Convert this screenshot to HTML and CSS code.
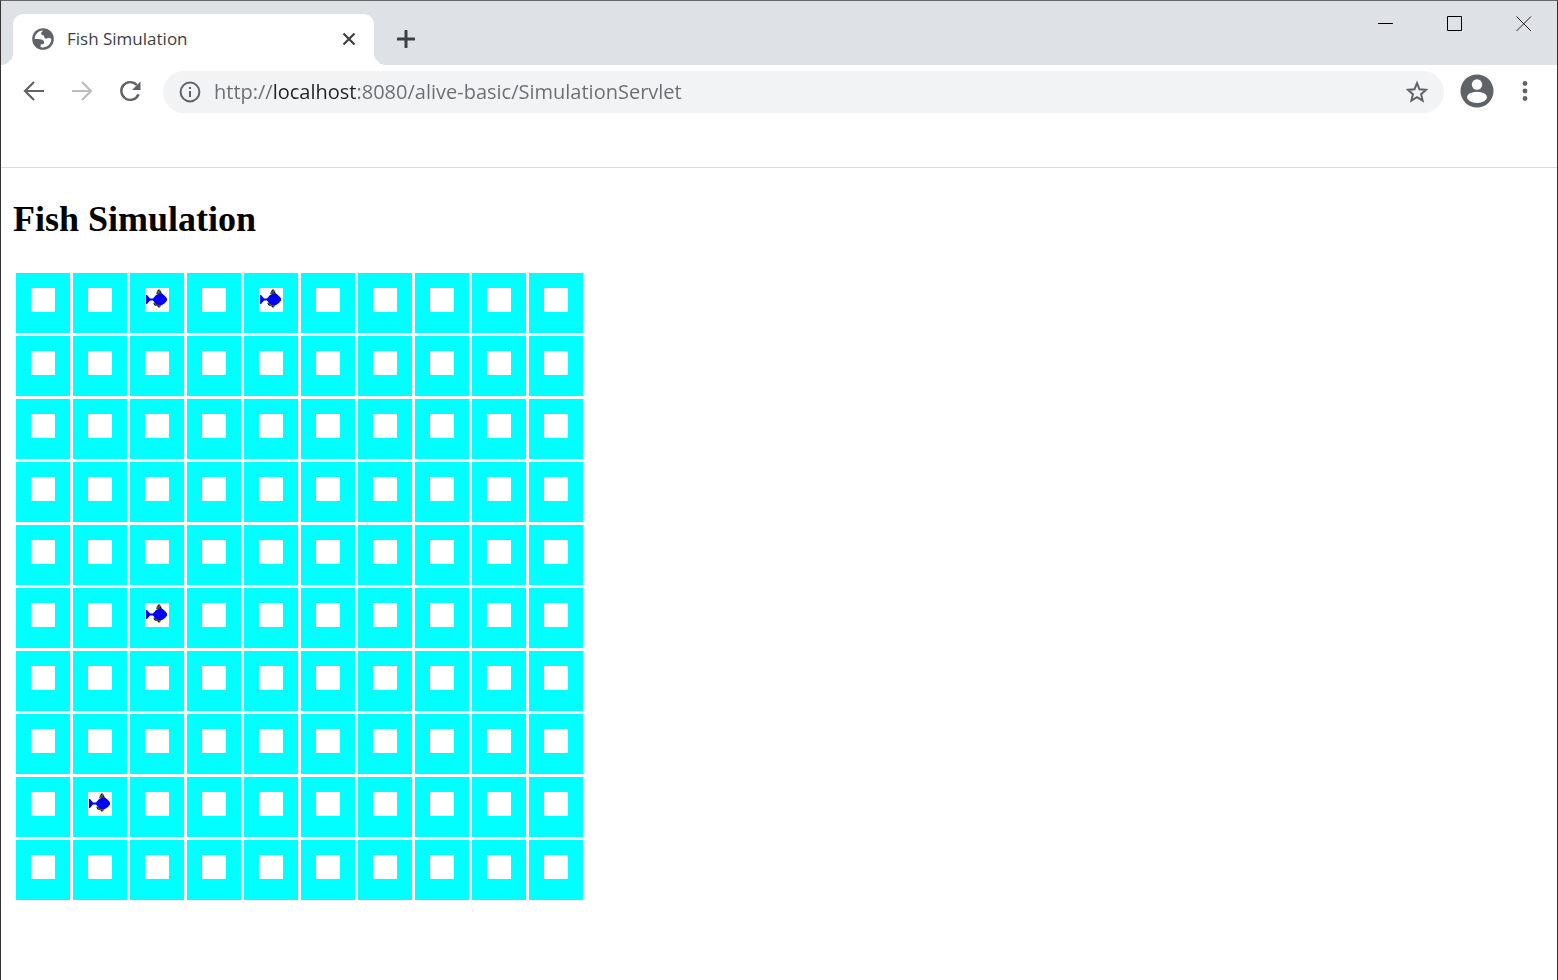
FILE: index.html
```html
<!DOCTYPE html>
<html lang="en">
<head>
<meta charset="utf-8">
<title>Fish Simulation</title>
<link rel="stylesheet" href="styles.css">
</head>
<body>
<svg class="symbols" aria-hidden="true">
  <symbol id="fish" viewBox="0 0 24 24">
    <path d="M11 6l1-3 2-2 2 2 1 3zM8 15l3-1 6 2-1 2-2 2-2-2-2 0z" fill="#55552c"/>
    <path d="M13 2h1v1h-1zM15 4h1v1h-1zM9 16h1v1H9zM13 18h1v1h-1z" fill="#111"/>
    <path d="M1 7h1l3 3.500h3L11 7l3-1.500h3l3 2.500 2 2.500v2L20 15l-3 2h-4l-3-2-2-2.500H5L2 16H1z" fill="#0000f8"/>
    <path d="M18 9h1v1h-1z" fill="#000050"/>
  </symbol>
</svg>
<div class="window">
  <header class="titlebar">
    <div class="tab">
      <svg class="globe" viewBox="0 0 22 22" aria-hidden="true">
        <circle cx="11" cy="11" r="10.800" fill="#5f6368"/>
        <path d="M11.500 2.500C10 3.500 9 4.500 9.200 6c.2 1.200 2.300.7 2.800 2 .5 1.200.3 2.200 1.500 2.600 1.500.5 2-.8 3.200-.9 1.200 0 2 .8 2.700 1.300A8.400 8.400 0 0 1 11 19.400c-1.500 0-2-.3-2.500-.5l.3-2.700c1.600 0 3 .1 3.300-1.200.4-1.600-.9-3.200-2.500-3.600-2.200-.5-4.700-.3-6.900-.5A8.400 8.400 0 0 1 11.500 2.500z" fill="#fff"/>
      </svg>
      <span class="tab-title">Fish Simulation</span>
      <button class="tab-close" aria-label="Close tab">
        <svg viewBox="0 0 14 14"><path d="M1.500 1.500l11 11M12.500 1.500l-11 11" stroke="#3c4043" stroke-width="2.200" fill="none"/></svg>
      </button>
    </div>
    <button class="new-tab" aria-label="New tab">
      <svg viewBox="0 0 18 18"><path d="M9 1v16M1 9h16" stroke="#3c4043" stroke-width="3" stroke-linecap="round" fill="none"/></svg>
    </button>
    <div class="window-buttons">
      <button aria-label="Minimize"><svg viewBox="0 0 16 16"><path d="M0 7.500h15" stroke="#000" fill="none"/></svg></button>
      <button aria-label="Maximize"><svg viewBox="0 0 16 16"><path d="M.5.5h14v14H.5z" stroke="#000" fill="none"/></svg></button>
      <button aria-label="Close"><svg viewBox="0 0 16 16"><path d="M.5.500l14.500 14.500M15 .5L.5 15" stroke="#222" fill="none"/></svg></button>
    </div>
  </header>
  <nav class="toolbar">
    <button class="nav-button" aria-label="Back">
      <svg viewBox="0 0 24 24"><path d="M12 3L3 12l9 9M3.500 12H22" stroke="#5f6368" stroke-width="2.200" fill="none"/></svg>
    </button>
    <button class="nav-button" aria-label="Forward" disabled>
      <svg viewBox="0 0 24 24"><path d="M12 3l9 9-9 9M20.500 12H2" stroke="#babcbe" stroke-width="2.200" fill="none"/></svg>
    </button>
    <button class="nav-button" aria-label="Reload">
      <svg viewBox="0 0 24 24"><path d="M20.500 15.200A8.900 8.900 0 1 1 18.800 6" stroke="#5f6368" stroke-width="2.400" fill="none"/><path d="M22.500 2.500v8.500H14z" fill="#5f6368"/></svg>
    </button>
    <div class="address">
      <svg class="info" viewBox="0 0 22 22" aria-hidden="true"><circle cx="11" cy="11" r="9.400" fill="none" stroke="#5f6368" stroke-width="2"/><path d="M10 6h2v2h-2zM10 10h2v6h-2z" fill="#5f6368"/></svg>
      <input class="url" type="text" aria-label="Address" value="http://localhost:8080/alive-basic/SimulationServlet">
      <button class="bookmark" aria-label="Bookmark this page">
        <svg viewBox="0 0 24 24"><path d="M12 3.200l2.500 6.100 6.500.6-4.900 4.300 1.500 6.400-5.600-3.400-5.600 3.400 1.500-6.400L3 9.900l6.500-.6z" stroke="#5f6368" stroke-width="2" fill="none"/></svg>
      </button>
    </div>
    <button class="profile" aria-label="Profile">
      <svg viewBox="0 0 34 34"><circle cx="17" cy="17" r="16.500" fill="#5f6368"/><circle cx="17" cy="10.500" r="5.200" fill="#fff"/><ellipse cx="17" cy="23.300" rx="10" ry="5.600" fill="#fff"/></svg>
    </button>
    <button class="more" aria-label="Menu">
      <svg viewBox="0 0 6 20"><circle cx="3" cy="2.500" r="2.400" fill="#5f6368"/><circle cx="3" cy="10" r="2.400" fill="#5f6368"/><circle cx="3" cy="17.500" r="2.400" fill="#5f6368"/></svg>
    </button>
  </nav>
  <main class="page">
    <h1>Fish Simulation</h1>
    <table class="sea" aria-label="Fish Simulation">
      <tr><td></td><td></td><td class="fish"><svg><use href="#fish"/></svg></td><td></td><td class="fish"><svg><use href="#fish"/></svg></td><td></td><td></td><td></td><td></td><td></td></tr>
      <tr><td></td><td></td><td></td><td></td><td></td><td></td><td></td><td></td><td></td><td></td></tr>
      <tr><td></td><td></td><td></td><td></td><td></td><td></td><td></td><td></td><td></td><td></td></tr>
      <tr><td></td><td></td><td></td><td></td><td></td><td></td><td></td><td></td><td></td><td></td></tr>
      <tr><td></td><td></td><td></td><td></td><td></td><td></td><td></td><td></td><td></td><td></td></tr>
      <tr><td></td><td></td><td class="fish"><svg><use href="#fish"/></svg></td><td></td><td></td><td></td><td></td><td></td><td></td><td></td></tr>
      <tr><td></td><td></td><td></td><td></td><td></td><td></td><td></td><td></td><td></td><td></td></tr>
      <tr><td></td><td></td><td></td><td></td><td></td><td></td><td></td><td></td><td></td><td></td></tr>
      <tr><td></td><td class="fish"><svg><use href="#fish"/></svg></td><td></td><td></td><td></td><td></td><td></td><td></td><td></td><td></td></tr>
      <tr><td></td><td></td><td></td><td></td><td></td><td></td><td></td><td></td><td></td><td></td></tr>
    </table>
  </main>
</div>
</body>
</html>
```
FILE: styles.css
```css
* { box-sizing: border-box; }
body { margin: 0; background: #fff; font-family: "Open Sans", "Noto Sans", sans-serif; }
button { display: grid; place-items: center; padding: 0; border: 0; background: none; }
svg { display: block; }
.symbols { display: none; }

.window {
  min-height: 100vh;
  border: 1px solid #333;
  border-top-color: #66686b;
  border-bottom: 0;
}

.titlebar {
  display: flex;
  align-items: flex-end;
  height: 64px;
  padding-left: 12px;
  background: #dee1e6;
}
.tab {
  position: relative;
  display: flex;
  align-items: center;
  width: 361px;
  height: 51px;
  padding: 0 15px 2px 19px;
  border-radius: 10px 10px 0 0;
  background: #fff;
}
.tab::before,
.tab::after {
  content: "";
  position: absolute;
  bottom: 0;
  width: 12px;
  height: 12px;
}
.tab::before { right: 100%; background: radial-gradient(circle at 0 0, transparent 12px, #fff 12px); }
.tab::after { left: 100%; background: radial-gradient(circle at 100% 0, transparent 12px, #fff 12px); }
.globe { width: 22px; height: 22px; margin-right: 13px; }
.tab-title { flex: 1; font-size: 17px; line-height: 24px; color: #3c4043; }
.tab-close { width: 20px; height: 20px; }
.tab-close svg { width: 14px; height: 14px; }
.new-tab { width: 24px; height: 51px; margin-left: 20px; padding-bottom: 2px; }
.new-tab svg { width: 18px; height: 18px; }
.window-buttons { display: flex; align-self: flex-start; margin-left: auto; }
.window-buttons button { width: 69px; height: 45px; padding-left: 2px; }
.window-buttons svg { width: 16px; height: 16px; }

.toolbar {
  display: flex;
  align-items: flex-start;
  height: 103px;
  padding: 6px 16px 0 9px;
  border-bottom: 1px solid #dadce0;
}
.nav-button { width: 48px; height: 40px; }
.nav-button svg { width: 24px; height: 24px; }
.address {
  display: flex;
  flex: 1;
  align-items: center;
  height: 42px;
  margin-left: 9px;
  padding: 0 15px 0 16px;
  border-radius: 21px;
  background: #f1f3f4;
}
.info { width: 22px; height: 22px; margin-right: 13px; }
.url {
  flex: 1;
  min-width: 0;
  height: 30px;
  padding: 0;
  border: 0;
  outline: 0;
  font: 20px/30px "Open Sans", "Noto Sans", sans-serif;
  color: #6a6d71;
  background: linear-gradient(90deg, #6a6d71 59px, #202124 59px 142px, #6a6d71 142px);
  -webkit-background-clip: text;
  background-clip: text;
  -webkit-text-fill-color: transparent;
}
.bookmark { width: 24px; height: 24px; }
.bookmark svg { width: 24px; height: 24px; }
.profile { width: 34px; height: 40px; margin-left: 16px; }
.profile svg { width: 34px; height: 34px; }
.more { width: 32px; height: 40px; margin-left: 15px; }
.more svg { width: 6px; height: 20px; }

.page { padding: 30px 12px; font-family: "Liberation Serif", serif; }
h1 { margin: 0 0 30px; font-size: 36px; line-height: 42px; color: #000; }
.sea { border-spacing: 3px; }
.sea td { padding: 15px 15px 21px; background: #0ff; }
.sea td::before { content: ""; display: block; width: 24px; height: 24px; background: #fff; }
.sea .fish::before { display: none; }
.fish svg { width: 24px; height: 24px; background: #fff; }
```
